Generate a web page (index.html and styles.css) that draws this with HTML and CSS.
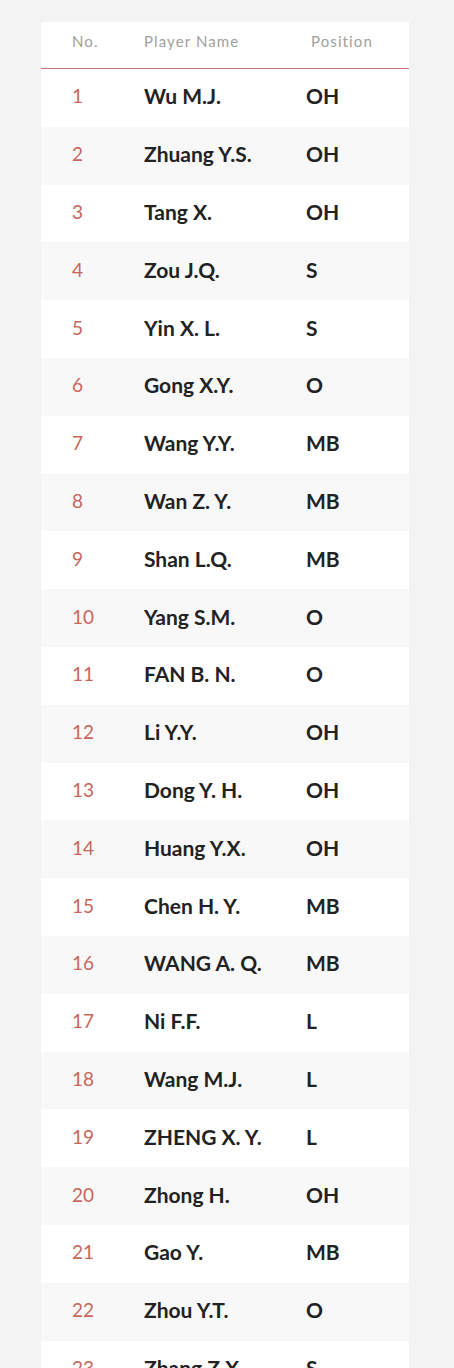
FILE: index.html
```html
<!DOCTYPE html>
<html>
<head>
<meta charset="utf-8">
<link rel="stylesheet" href="styles.css">
</head>
<body>
<div class="page">
  <div class="table">
    <div class="row head">
      <div class="c-no">No.</div>
      <div class="c-name">Player Name</div>
      <div class="c-pos">Position</div>
    </div>
    <div class="row"><div class="c-no">1</div><div class="c-name">Wu M.J.</div><div class="c-pos">OH</div></div>
    <div class="row"><div class="c-no">2</div><div class="c-name">Zhuang Y.S.</div><div class="c-pos">OH</div></div>
    <div class="row"><div class="c-no">3</div><div class="c-name">Tang X.</div><div class="c-pos">OH</div></div>
    <div class="row"><div class="c-no">4</div><div class="c-name">Zou J.Q.</div><div class="c-pos">S</div></div>
    <div class="row"><div class="c-no">5</div><div class="c-name">Yin X. L.</div><div class="c-pos">S</div></div>
    <div class="row"><div class="c-no">6</div><div class="c-name">Gong X.Y.</div><div class="c-pos">O</div></div>
    <div class="row"><div class="c-no">7</div><div class="c-name">Wang Y.Y.</div><div class="c-pos">MB</div></div>
    <div class="row"><div class="c-no">8</div><div class="c-name">Wan Z. Y.</div><div class="c-pos">MB</div></div>
    <div class="row"><div class="c-no">9</div><div class="c-name">Shan L.Q.</div><div class="c-pos">MB</div></div>
    <div class="row"><div class="c-no">10</div><div class="c-name">Yang S.M.</div><div class="c-pos">O</div></div>
    <div class="row"><div class="c-no">11</div><div class="c-name">FAN B. N.</div><div class="c-pos">O</div></div>
    <div class="row"><div class="c-no">12</div><div class="c-name">Li Y.Y.</div><div class="c-pos">OH</div></div>
    <div class="row"><div class="c-no">13</div><div class="c-name">Dong Y. H.</div><div class="c-pos">OH</div></div>
    <div class="row"><div class="c-no">14</div><div class="c-name">Huang Y.X.</div><div class="c-pos">OH</div></div>
    <div class="row"><div class="c-no">15</div><div class="c-name">Chen H. Y.</div><div class="c-pos">MB</div></div>
    <div class="row"><div class="c-no">16</div><div class="c-name">WANG A. Q.</div><div class="c-pos">MB</div></div>
    <div class="row"><div class="c-no">17</div><div class="c-name">Ni F.F.</div><div class="c-pos">L</div></div>
    <div class="row"><div class="c-no">18</div><div class="c-name">Wang M.J.</div><div class="c-pos">L</div></div>
    <div class="row"><div class="c-no">19</div><div class="c-name">ZHENG X. Y.</div><div class="c-pos">L</div></div>
    <div class="row"><div class="c-no">20</div><div class="c-name">Zhong H.</div><div class="c-pos">OH</div></div>
    <div class="row"><div class="c-no">21</div><div class="c-name">Gao Y.</div><div class="c-pos">MB</div></div>
    <div class="row"><div class="c-no">22</div><div class="c-name">Zhou Y.T.</div><div class="c-pos">O</div></div>
    <div class="row"><div class="c-no">23</div><div class="c-name">Zhang Z.X.</div><div class="c-pos">S</div></div>
  </div>
</div>
</body>
</html>
```

FILE: styles.css
```css
html, body {
  margin: 0;
  padding: 0;
  background: #f3f3f3;
}
.page {
  padding: 22px 45px 0 41px;
  height: 1368px;
  overflow: hidden;
  box-sizing: border-box;
}
.table {
  width: 368px;
  font-family: Lato, "Open Sans", sans-serif;
}
.row {
  display: flex;
  align-items: center;
  height: 57.8px;
  padding-bottom: 4px;
  box-sizing: border-box;
  background: #f8f8f8;
  color: #222;
  font-size: 21px;
  font-weight: 700;
}
.row:nth-child(even) {
  background: #ffffff;
}
.row.head {
  height: 47px;
  padding-bottom: 8px;
  background: #ffffff;
  border-bottom: 1px solid #c77a72;
  font-size: 15px;
  font-weight: 400;
  color: #a0a0a0;
  letter-spacing: 1.1px;
}
.c-no {
  width: 103px;
  padding-left: 31px;
  box-sizing: border-box;
  color: #c8665b;
  font-size: 19px;
  font-weight: 400;
}
.head .c-no {
  color: #a0a0a0;
  font-size: 15px;
}
.c-name {
  width: 162px;
}
.c-pos {
  flex: 1;
}
.head .c-pos { padding-left: 5px; }
```
